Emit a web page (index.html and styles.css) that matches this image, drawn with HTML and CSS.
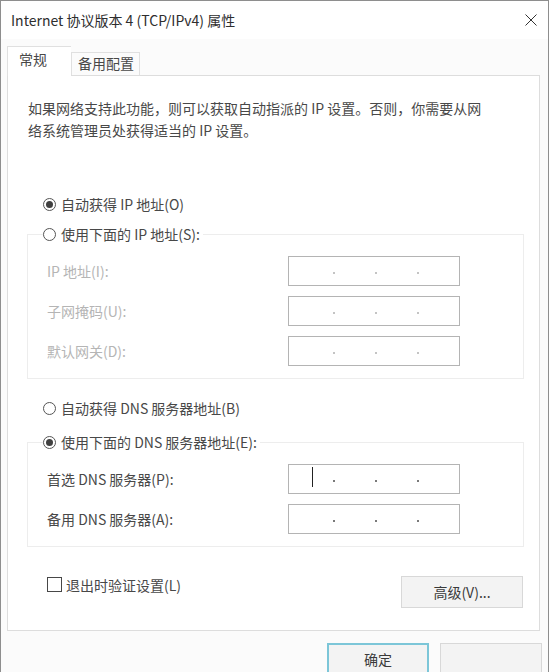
FILE: index.html
```html
<!DOCTYPE html>
<html lang="zh-CN">
<head>
<meta charset="utf-8">
<title>Internet 协议版本 4 (TCP/IPv4) 属性</title>
<link rel="stylesheet" href="styles.css">
</head>
<body>
<div class="window">
  <header class="titlebar">
    <span class="title">Internet 协议版本 4 (TCP/IPv4) 属性</span>
    <span class="close">
      <svg width="12" height="12" viewBox="0 0 12 12"><path d="M0.5 0.5L11.5 11.5M11.5 0.5L0.5 11.5" stroke="#333" stroke-width="1" fill="none"/></svg>
    </span>
  </header>
  <nav class="tabs">
    <div class="tab active">常规</div>
    <div class="tab">备用配置</div>
  </nav>
  <section class="panel">
    <p class="desc">如果网络支持此功能，则可以获取自动指派的 IP 设置。否则，你需要从网<br>络系统管理员处获得适当的 IP 设置。</p>

    <div class="radio-row opt-first"><span class="radio checked"></span><span>自动获得 IP 地址(O)</span></div>

    <fieldset class="group group-ip">
      <legend class="radio-row"><span class="radio"></span><span>使用下面的 IP 地址(S):</span></legend>
      <div class="field-row disabled"><label>IP 地址(I):</label><div class="ipbox"><i class="dot"></i><i class="dot"></i><i class="dot"></i></div></div>
      <div class="field-row disabled"><label>子网掩码(U):</label><div class="ipbox"><i class="dot"></i><i class="dot"></i><i class="dot"></i></div></div>
      <div class="field-row disabled"><label>默认网关(D):</label><div class="ipbox"><i class="dot"></i><i class="dot"></i><i class="dot"></i></div></div>
    </fieldset>

    <div class="radio-row opt-dns-auto"><span class="radio"></span><span>自动获得 DNS 服务器地址(B)</span></div>

    <fieldset class="group group-dns">
      <legend class="radio-row"><span class="radio checked"></span><span>使用下面的 DNS 服务器地址(E):</span></legend>
      <div class="field-row"><label>首选 DNS 服务器(P):</label><div class="ipbox with-caret"><i class="caret"></i><i class="dot"></i><i class="dot"></i><i class="dot"></i></div></div>
      <div class="field-row"><label>备用 DNS 服务器(A):</label><div class="ipbox"><i class="dot"></i><i class="dot"></i><i class="dot"></i></div></div>
    </fieldset>

    <div class="bottom-row">
      <div class="check-row"><span class="checkbox"></span><span>退出时验证设置(L)</span></div>
      <button class="btn btn-advanced">高级(V)...</button>
    </div>
  </section>
  <footer class="footer">
    <button class="btn btn-dialog btn-default">确定</button>
    <button class="btn btn-dialog"></button>
  </footer>
</div>
</body>
</html>
```

FILE: styles.css
```css
* {
  box-sizing: border-box;
}

body {
  margin: 0;
  background: #ffffff;
  font-family: "Noto Sans CJK SC", "Noto Sans", sans-serif;
  font-size: 14px;
  color: #484848;
}

.window {
  width: 549px;
  height: 672px;
  border: 1px solid #8e8e8e;
  border-bottom: 0;
  background: #fbfbfb;
  overflow: hidden;
}

.titlebar {
  height: 38px;
  display: flex;
  align-items: center;
  justify-content: space-between;
  padding: 0 11px 0 10px;
  background: #ffffff;
}

.title {
  color: #2e2e2e;
  font-size: 14px;
  line-height: 20px;
}

.close {
  display: flex;
}

.tabs {
  height: 36px;
  display: flex;
  align-items: flex-end;
  padding-left: 6px;
}

.tab {
  height: 23px;
  line-height: 21px;
  padding: 0 5px 0 6px;
  border: 1px solid #e0e0e0;
  border-bottom: 0;
  background: #fbfbfb;
  color: #484848;
}

.tab.active {
  width: 64px;
  height: 30px;
  padding: 2px 0 0 11px;
  margin-bottom: -1px;
  background: #ffffff;
  position: relative;
  z-index: 1;
  border-right: 0;
}

.panel {
  height: 556px;
  margin: 0 8px 0 6px;
  border: 1px solid #dddddd;
  background: #ffffff;
  padding: 21px 0 0 19px;
}

.desc {
  margin: 0;
  padding-left: 1px;
  line-height: 22px;
}

.radio-row {
  display: flex;
  align-items: center;
  gap: 5px;
  height: 24px;
  line-height: 24px;
}

.radio {
  width: 13px;
  height: 13px;
  border: 1px solid #555555;
  border-radius: 50%;
  background: #ffffff;
  display: flex;
  align-items: center;
  justify-content: center;
  flex: none;
}

.radio.checked::after {
  content: "";
  width: 7px;
  height: 7px;
  border-radius: 50%;
  background: #404040;
}

.opt-first {
  margin: 51px 0 0 16px;
}

.opt-dns-auto {
  margin: 17px 0 0 16px;
}

.group {
  width: 497px;
  min-width: 0;
  margin: 6px 0 0 0;
  padding: 0 0 12px 15px;
  border: 1px solid #ededed;
}

.group-dns {
  margin-top: 10px;
}

.group legend {
  padding: 0 3px 0 0;
  background: #ffffff;
}

.field-row {
  display: flex;
  align-items: center;
  height: 30px;
  margin-top: 10px;
  padding-left: 4px;
}

.field-row label {
  width: 241px;
  flex: none;
}

.field-row.disabled label {
  color: #b5b5b5;
}

.ipbox {
  width: 172px;
  height: 30px;
  border: 1px solid #b4b4b4;
  background: #ffffff;
  display: flex;
  align-items: flex-start;
  gap: 40px;
  padding-left: 44px;
}

.ipbox.with-caret {
  padding-left: 23px;
}

.dot {
  width: 2px;
  height: 2px;
  margin-top: 15px;
  background: #7a7a7a;
}

.disabled .dot {
  background: #c4c4c4;
}

.caret {
  width: 1px;
  height: 20px;
  margin: 2px -20px 0 0;
  background: #222222;
}

.bottom-row {
  width: 497px;
  margin-top: 29px;
  display: flex;
  justify-content: space-between;
  align-items: flex-start;
}

.check-row {
  display: flex;
  align-items: center;
  gap: 4px;
  margin: 1px 0 0 20px;
  height: 15px;
}

.checkbox {
  width: 15px;
  height: 15px;
  border: 1px solid #474747;
  background: #ffffff;
  flex: none;
}

.btn {
  font-family: inherit;
  font-size: 14px;
  color: #3a3a3a;
  background: #f3f3f3;
  border: 1px solid #d8d8d8;
  height: 32px;
  padding: 0;
}

.btn-advanced {
  width: 122px;
  margin-right: 1px;
}

.footer {
  display: flex;
  justify-content: flex-end;
  gap: 11px;
  padding: 12px 6px 0 0;
}

.btn-dialog {
  width: 102px;
}

.btn-default {
  border: 2px solid #7cc6d8;
}
```
